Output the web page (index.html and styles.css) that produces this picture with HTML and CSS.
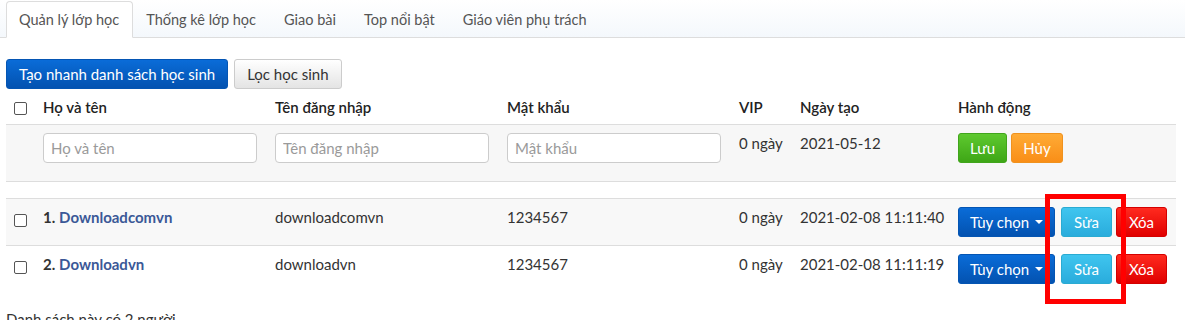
FILE: index.html
```html
<!doctype html>
<html lang="vi">
<head>
  <meta charset="UTF-8">
  <meta name="viewport" content="width=device-width, initial-scale=1.0">
  <title>Quản lý lớp học</title>
  <link rel="stylesheet" href="styles.css">
</head>
<body>

<div class="Page">
  <ul class="Tabs">
    <li class="Tabs-item is-active">Quản lý lớp học</li>
    <li class="Tabs-item">Thống kê lớp học</li>
    <li class="Tabs-item">Giao bài</li>
    <li class="Tabs-item">Top nổi bật</li>
    <li class="Tabs-item">Giáo viên phụ trách</li>
  </ul>

  <div class="Toolbar">
    <button class="Btn Btn--primary">Tạo nhanh danh sách học sinh</button>
    <button class="Btn Btn--default">Lọc học sinh</button>
  </div>

  <table class="Students">
    <colgroup>
      <col class="Students-colCheck">
      <col class="Students-colWide">
      <col class="Students-colWide">
      <col class="Students-colWide">
      <col class="Students-colVip">
      <col class="Students-colDate">
      <col>
    </colgroup>
    <thead>
      <tr class="Students-head">
        <th class="Students-check"><span class="Checkbox"></span></th>
        <th>Họ và tên</th>
        <th>Tên đăng nhập</th>
        <th>Mật khẩu</th>
        <th>VIP</th>
        <th>Ngày tạo</th>
        <th>Hành động</th>
      </tr>
    </thead>
    <tbody>
      <tr class="Students-new">
        <td></td>
        <td><input class="Field" type="text" placeholder="Họ và tên"></td>
        <td><input class="Field" type="text" placeholder="Tên đăng nhập"></td>
        <td><input class="Field" type="text" placeholder="Mật khẩu"></td>
        <td>0 ngày</td>
        <td>2021-05-12</td>
        <td>
          <div class="Actions">
            <button class="Btn Btn--success">Lưu</button>
            <button class="Btn Btn--warning">Hủy</button>
          </div>
        </td>
      </tr>
      <tr class="Students-spacer"><td colspan="7"></td></tr>
      <tr class="Students-row is-odd">
        <td class="Students-check"><span class="Checkbox"></span></td>
        <td><b>1.</b> <a class="Students-name" href="#">Downloadcomvn</a></td>
        <td>downloadcomvn</td>
        <td>1234567</td>
        <td>0 ngày</td>
        <td>2021-02-08 11:11:40</td>
        <td>
          <div class="Actions">
            <button class="Btn Btn--primary Btn--menu">Tùy chọn <span class="Caret"></span></button>
            <button class="Btn Btn--info">Sửa</button>
            <button class="Btn Btn--danger">Xóa</button>
          </div>
        </td>
      </tr>
      <tr class="Students-row">
        <td class="Students-check"><span class="Checkbox"></span></td>
        <td><b>2.</b> <a class="Students-name" href="#">Downloadvn</a></td>
        <td>downloadvn</td>
        <td>1234567</td>
        <td>0 ngày</td>
        <td>2021-02-08 11:11:19</td>
        <td>
          <div class="Actions">
            <button class="Btn Btn--primary Btn--menu">Tùy chọn <span class="Caret"></span></button>
            <button class="Btn Btn--info">Sửa</button>
            <button class="Btn Btn--danger">Xóa</button>
          </div>
        </td>
      </tr>
    </tbody>
  </table>

  <p class="Summary">Danh sách này có 2 người</p>

  <div class="Highlight"></div>
</div>

</body>
</html>
```

FILE: styles.css
```css
body {
  margin: 0;
  background-color: white;
  color: #333;
  font-family: Lato, "Open Sans", sans-serif;
  font-size: 15px;
  line-height: 21px;
}

.Page {
  position: relative;
  padding: 0 9px 0 6px;
}

/* tabs */

.Tabs {
  display: flex;
  margin: 0 -9px 0 -6px;
  padding: 1px 0 0 6px;
  list-style-type: none;
  border-bottom: 1px solid #ddd;
  background: linear-gradient(#fff, #f4f8fc);
}

.Tabs-item {
  margin-bottom: -1px;
  padding: 0 14px 0 12px;
  height: 35px;
  line-height: 35px;
  border: 1px solid transparent;
  border-radius: 4px 4px 0 0;
  color: #555;
  font-size: 14.5px;
}

.Tabs-item.is-active {
  padding-right: 13px;
  border-color: #ddd #ddd transparent;
  background-color: white;
}

/* buttons */

.Toolbar {
  display: flex;
  column-gap: 6px;
  margin-top: 21px;
}

.Btn {
  display: inline-flex;
  align-items: center;
  justify-content: center;
  box-sizing: border-box;
  height: 30px;
  padding: 0 12px;
  border: 1px solid transparent;
  border-radius: 3px;
  color: white;
  font-family: inherit;
  font-size: 15px;
}

.Btn--primary {
  border-color: #0455b3;
  background: linear-gradient(#0a6cd8, #0352b0);
}

.Btn--default {
  border-color: #ccc;
  background: linear-gradient(#fff, #e4e4e4);
  color: #333;
}

.Btn--success {
  width: 49px;
  border-color: #41a51c;
  background: linear-gradient(#5ec92f, #3ea616);
}

.Btn--warning {
  width: 52px;
  border-color: #f0921e;
  background: linear-gradient(#ffab36, #f98e17);
}

.Btn--info {
  width: 51px;
  border-color: #2aabd2;
  background: linear-gradient(#3fc5ef, #2aacdc);
}

.Btn--danger {
  width: 52px;
  border-color: #d40000;
  background: linear-gradient(#ff2a1f, #e00000);
}

.Btn--menu {
  width: 97px;
  margin-right: 2px;
  column-gap: 6px;
}

.Caret {
  width: 0;
  height: 0;
  border-top: 4px solid white;
  border-left: 4px solid transparent;
  border-right: 4px solid transparent;
}

.Actions {
  display: flex;
  column-gap: 4px;
}

/* table */

.Students {
  width: 100%;
  table-layout: fixed;
  border-collapse: collapse;
}

.Students-colCheck {
  width: 37px;
}

.Students-colWide {
  width: 232px;
}

.Students-colVip {
  width: 61px;
}

.Students-colDate {
  width: 158px;
}

.Students th,
.Students td {
  padding: 8px 18px 0 0;
  text-align: left;
  vertical-align: top;
  white-space: nowrap;
  border-bottom: 1px solid #ddd;
}

.Students th {
  color: #222;
  font-weight: 600;
}

.Students-head {
  height: 35px;
}

.Students-new {
  height: 57px;
}

.Students-new td {
  background-color: #f7f7f7;
}

.Students-spacer {
  height: 17px;
}

.Students .Students-spacer td {
  padding: 0;
}

.Students-row {
  height: 47px;
}

.Students-row.is-odd td {
  background-color: #f8f8f8;
}

.Students-row:last-child td {
  border-bottom: 0;
}

.Students th.Students-check {
  padding: 13px 0 0 8px;
}

.Students td.Students-check {
  padding: 15px 0 0 8px;
}

.Students-row b {
  color: #333;
}

.Students-name {
  color: #3b5897;
  font-weight: 700;
  text-decoration: none;
}

.Checkbox {
  display: block;
  width: 11px;
  height: 11px;
  border: 1px solid #555;
  border-radius: 2px;
  background-color: white;
}

.Field {
  display: block;
  box-sizing: border-box;
  width: 214px;
  height: 30px;
  padding: 0 7px;
  border: 1px solid #ccc;
  border-radius: 4px;
  color: #333;
  font-family: inherit;
  font-size: 15px;
}

.Field::placeholder {
  color: #9a9a9a;
}

.Summary {
  margin: 17px 0 0;
}

/* red box drawn over the edit buttons */
.Highlight {
  position: absolute;
  left: 1045px;
  top: 194px;
  width: 71px;
  height: 100px;
  border: 5px solid #f00;
}
```
